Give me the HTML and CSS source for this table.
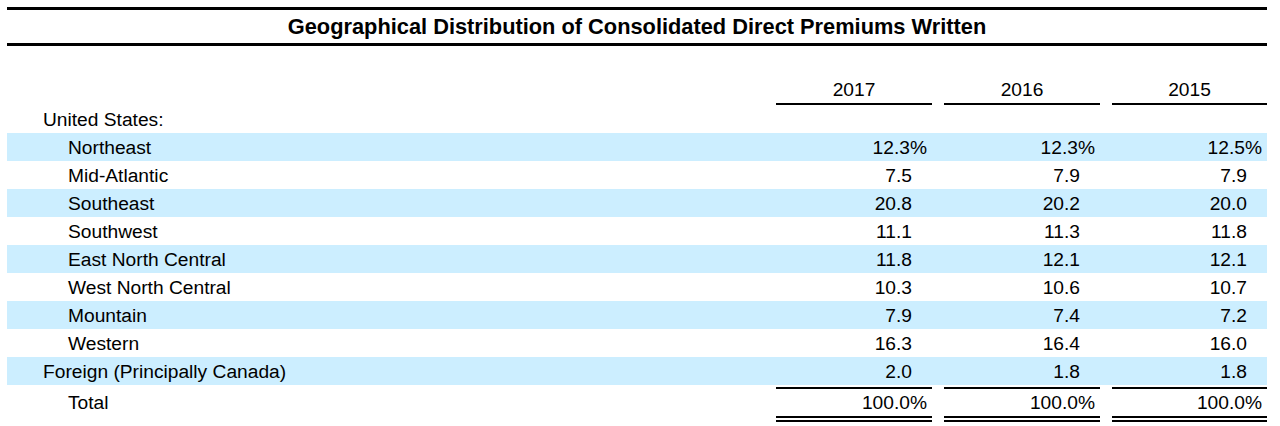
FILE: index.html
```html
<!DOCTYPE html>
<html lang="en">
<head>
<meta charset="utf-8">
<title>Geographical Distribution of Consolidated Direct Premiums Written</title>
<link rel="stylesheet" href="styles.css">
</head>
<body>
<div class="page">
  <h1 class="title">Geographical Distribution of Consolidated Direct Premiums Written</h1>
  <div class="table">
    <div class="row head">
      <div class="label"></div>
      <div class="year">2017</div>
      <div class="year">2016</div>
      <div class="year">2015</div>
    </div>
    <div class="row">
      <div class="label">United States:</div>
      <div class="num"></div><div class="num"></div><div class="num"></div>
    </div>
    <div class="row band">
      <div class="label sub">Northeast</div>
      <div class="num">12.3%</div><div class="num">12.3%</div><div class="num">12.5%</div>
    </div>
    <div class="row">
      <div class="label sub">Mid-Atlantic</div>
      <div class="num np">7.5</div><div class="num np">7.9</div><div class="num np">7.9</div>
    </div>
    <div class="row band">
      <div class="label sub">Southeast</div>
      <div class="num np">20.8</div><div class="num np">20.2</div><div class="num np">20.0</div>
    </div>
    <div class="row">
      <div class="label sub">Southwest</div>
      <div class="num np">11.1</div><div class="num np">11.3</div><div class="num np">11.8</div>
    </div>
    <div class="row band">
      <div class="label sub">East North Central</div>
      <div class="num np">11.8</div><div class="num np">12.1</div><div class="num np">12.1</div>
    </div>
    <div class="row">
      <div class="label sub">West North Central</div>
      <div class="num np">10.3</div><div class="num np">10.6</div><div class="num np">10.7</div>
    </div>
    <div class="row band">
      <div class="label sub">Mountain</div>
      <div class="num np">7.9</div><div class="num np">7.4</div><div class="num np">7.2</div>
    </div>
    <div class="row">
      <div class="label sub">Western</div>
      <div class="num np">16.3</div><div class="num np">16.4</div><div class="num np">16.0</div>
    </div>
    <div class="row band">
      <div class="label">Foreign (Principally Canada)</div>
      <div class="num np">2.0</div><div class="num np">1.8</div><div class="num np">1.8</div>
    </div>
    <div class="row total">
      <div class="label sub">Total</div>
      <div class="num">100.0%</div><div class="num">100.0%</div><div class="num">100.0%</div>
    </div>
  </div>
</div>
</body>
</html>
```

FILE: styles.css
```css
html, body {
  margin: 0;
  padding: 0;
  background: #ffffff;
}

body {
  font-family: "Liberation Sans", Arial, sans-serif;
  color: #000000;
  font-size: 19.2px;
}

.page {
  padding: 7px 0 0 7px;
  width: 1260px;
}

.title {
  margin: 0;
  font-size: 21.8px;
  font-weight: bold;
  text-align: center;
  line-height: 33px;
  border-top: 3px solid #000;
  border-bottom: 3px solid #000;
}

.row {
  display: grid;
  grid-template-columns: 757px 156px 156px 155px;
  column-gap: 12px;
  box-sizing: border-box;
  height: 28px;
  padding-top: 1px;
  line-height: 27px;
}

.band {
  background: #cceeff;
}

.label {
  padding-left: 36px;
  white-space: nowrap;
}

.label.sub {
  padding-left: 61px;
}

.row.head {
  height: auto;
  padding-top: 0;
}

.head .label,
.head .year {
  padding-top: 30px;
  line-height: 27px;
}

.year {
  text-align: center;
  border-bottom: 2px solid #000;
}

.num {
  text-align: right;
  padding-right: 5px;
}

.num.np {
  padding-right: 20px;
}

.row.total {
  height: auto;
  margin-top: 2px;
  padding-top: 0;
  line-height: 26px;
}

.total .label {
  padding-top: 3px;
}

.total .num {
  padding-top: 1px;
  border-top: 2px solid #000;
  border-bottom: 6px double #000;
}
```
